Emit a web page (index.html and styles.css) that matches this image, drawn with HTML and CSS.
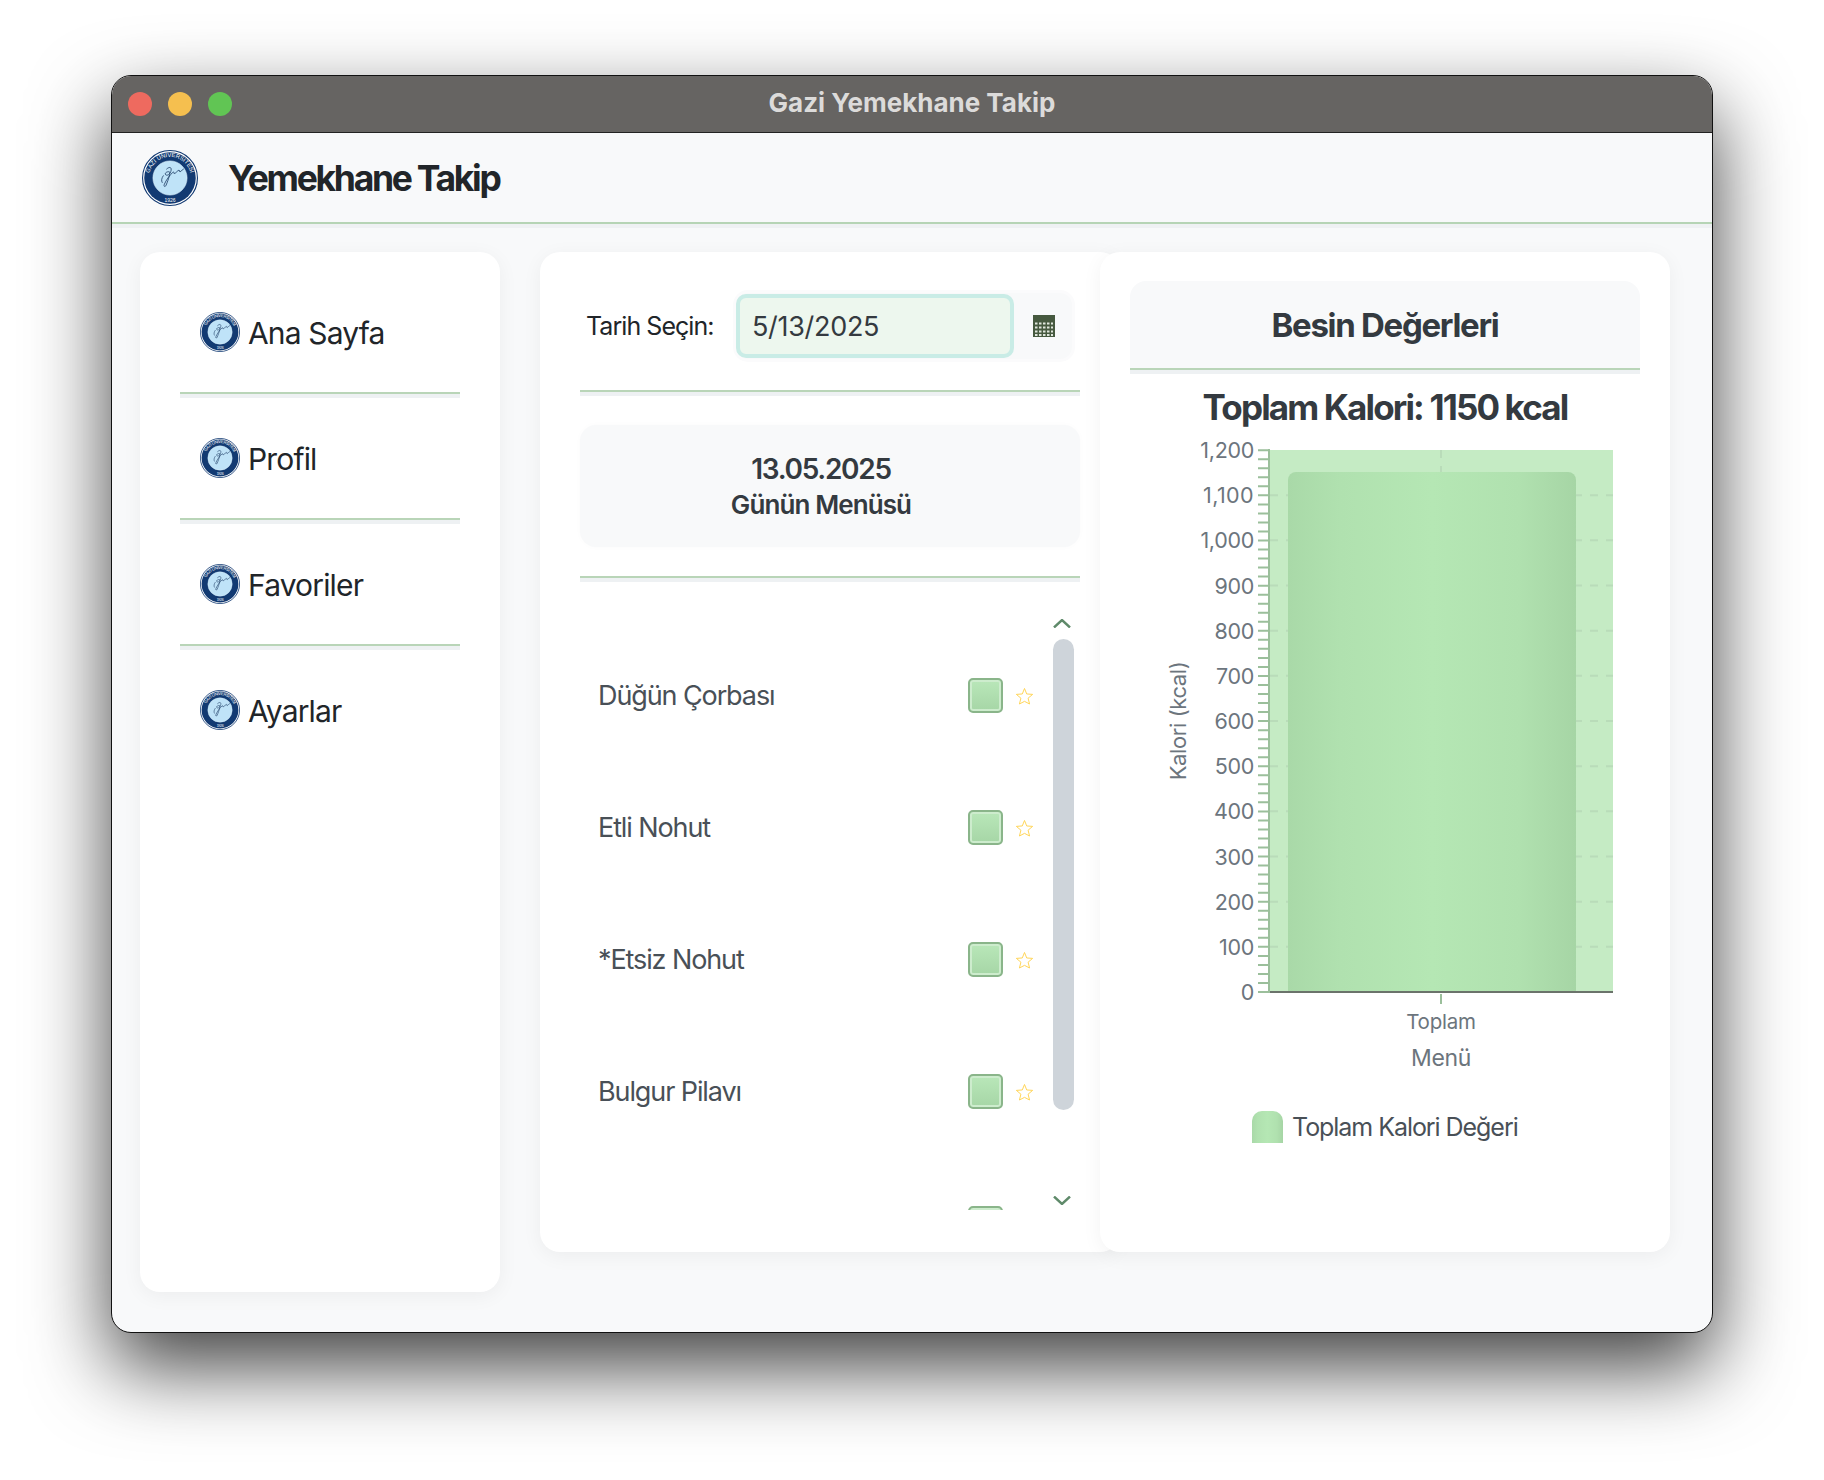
FILE: index.html
```html
<!DOCTYPE html>
<html lang="tr">
<head>
<meta charset="utf-8">
<title>Gazi Yemekhane Takip</title>
<link rel="stylesheet" href="styles.css">
</head>
<body>
<svg class="defs" width="0" height="0" aria-hidden="true">
  <defs>
    <path id="arcTop" d="M17 68A37.600 37.600 0 1 1 83 68"/>
    <symbol id="seal" viewBox="0 0 100 100">
      <circle cx="50" cy="50" r="49" fill="#fff" stroke="#123a72" stroke-width="2"/>
      <circle cx="50" cy="50" r="46" fill="#123a72"/>
      <circle cx="50" cy="50" r="30.500" fill="#bfe3f8" stroke="#dff1fb" stroke-width="1"/>
      <text class="seal-text" font-size="10.500" text-anchor="middle"><textPath href="#arcTop" startOffset="50%">GAZİ ÜNİVERSİTESİ</textPath></text>
      <text class="seal-text" x="50" y="92" text-anchor="middle" font-size="9">1926</text>
      <path d="M44 34c5-5 9-3 8 2-1 7-7 11-10 8-2-3 3-6 7-5 2 1-1 12-6 24-2 4-5 2-3-2 3-7 10-17 15-21 3-3 1 3 3 2 3-1 5-5 8-6 2 0 0 3 2 3 2-1 4-4 6-5M38 46c-3 4-4 9-2 12" fill="none" stroke="#16345e" stroke-width="1.400" stroke-linecap="round"/>
    </symbol>
    <symbol id="star" viewBox="0 0 18 18">
      <path d="M9 1.400l2.100 5.200 5.600.4-4.300 3.600 1.400 5.500L9 13.600l-4.800 2.500 1.400-5.500L1.300 7l5.600-.4z" fill="#fff" stroke="#ffd350" stroke-width=".9"/>
    </symbol>
    <linearGradient id="barFill" x1="0" x2="1" y1="0" y2="0">
      <stop offset="0" stop-color="#a9d9a8"/>
      <stop offset=".18" stop-color="#b0e1af"/>
      <stop offset=".5" stop-color="#b5e7b4"/>
      <stop offset=".8" stop-color="#b0e1af"/>
      <stop offset="1" stop-color="#a6d5a5"/>
    </linearGradient>
  </defs>
</svg>

<div class="window">
  <div class="titlebar">
    <div class="lights">
      <span class="light red"></span>
      <span class="light yellow"></span>
      <span class="light green"></span>
    </div>
    <div class="window-title">Gazi Yemekhane Takip</div>
  </div>

  <header class="app-header">
    <svg class="seal-lg"><use href="#seal"/></svg>
    <h1 class="app-title">Yemekhane Takip</h1>
  </header>

  <main class="content">
    <nav class="panel sidebar">
      <a class="nav-item"><svg class="seal-sm"><use href="#seal"/></svg><span>Ana Sayfa</span></a>
      <div class="sep"></div>
      <a class="nav-item"><svg class="seal-sm"><use href="#seal"/></svg><span>Profil</span></a>
      <div class="sep"></div>
      <a class="nav-item"><svg class="seal-sm"><use href="#seal"/></svg><span>Favoriler</span></a>
      <div class="sep"></div>
      <a class="nav-item"><svg class="seal-sm"><use href="#seal"/></svg><span>Ayarlar</span></a>
    </nav>

    <section class="panel menu">
      <div class="date-row">
        <span class="date-label">Tarih Seçin:</span>
        <div class="date-picker">
          <div class="date-field">5/13/2025</div>
          <div class="date-btn">
            <svg width="22" height="22" viewBox="0 0 22 22">
              <rect width="22" height="22" fill="#46593f"/>
              <path d="M2 8.500H20M2 12.500H20M2 16.500H20M2 20H20" stroke="#dfe6dc" stroke-width="2" stroke-dasharray="2.500 1.500"/>
            </svg>
          </div>
        </div>
      </div>
      <div class="sep sep-date"></div>
      <div class="day-box">
        <div class="day-date">13.05.2025</div>
        <div class="day-caption">Günün Menüsü</div>
      </div>
      <div class="sep sep-day"></div>
      <div class="list-area">
        <div class="rows">
          <div class="row"><span class="dish">Düğün Çorbası</span><span class="check"></span><svg class="star"><use href="#star"/></svg></div>
          <div class="row"><span class="dish">Etli Nohut</span><span class="check"></span><svg class="star"><use href="#star"/></svg></div>
          <div class="row"><span class="dish">*Etsiz Nohut</span><span class="check"></span><svg class="star"><use href="#star"/></svg></div>
          <div class="row"><span class="dish">Bulgur Pilavı</span><span class="check"></span><svg class="star"><use href="#star"/></svg></div>
          <div class="row"><span class="dish"></span><span class="check"></span><svg class="star"><use href="#star"/></svg></div>
        </div>
        <div class="scroll">
          <svg class="arrow" width="18" height="9" viewBox="0 0 18 9"><path d="M1 8.500L9 1l8 7.500" fill="none" stroke="#5f8a6a" stroke-width="2.400"/></svg>
          <div class="thumb"></div>
          <svg class="arrow arrow-down" width="18" height="9" viewBox="0 0 18 9"><path d="M1 .5L9 8l8-7.500" fill="none" stroke="#5f8a6a" stroke-width="2.400"/></svg>
        </div>
      </div>
    </section>

    <section class="panel nutrition">
      <div class="nut-box"><h2 class="nut-title">Besin Değerleri</h2></div>
      <div class="sep"></div>
      <h3 class="total">Toplam Kalori: 1150 kcal</h3>
      <svg class="chart" width="510" height="720" viewBox="1130 440 510 720">
        <rect x="1270" y="450" width="343" height="542" fill="#c5ebc4"/>
        <path class="grid" d="M1270 495.200H1613M1270 540.300H1613M1270 585.500H1613M1270 630.700H1613M1270 675.800H1613M1270 721H1613M1270 766.200H1613M1270 811.300H1613M1270 856.500H1613M1270 901.700H1613M1270 946.800H1613M1441 450V992"/>
        <path d="M1288 992V480a8 8 0 0 1 8-8h272a8 8 0 0 1 8 8V992z" fill="url(#barFill)"/>
        <path class="ticks" d="M1263 993V449"/>
        <path class="axis-y" d="M1269 449V993M1441 994V1004"/>
        <path class="axis-x" d="M1270 992H1613"/>
        <g class="y-labels">
          <text x="1254" y="458">1,200</text>
          <text class="wide" x="1254" y="503">1,100</text>
          <text x="1254" y="548">1,000</text>
          <text x="1254" y="594">900</text>
          <text x="1254" y="639">800</text>
          <text x="1254" y="684">700</text>
          <text x="1254" y="729">600</text>
          <text x="1254" y="774">500</text>
          <text x="1254" y="819">400</text>
          <text x="1254" y="865">300</text>
          <text x="1254" y="910">200</text>
          <text x="1254" y="955">100</text>
          <text x="1254" y="1000">0</text>
        </g>
        <text class="axis-title" transform="translate(1186 721) rotate(-90)" text-anchor="middle">Kalori (kcal)</text>
        <text class="cat-label" x="1441" y="1029" text-anchor="middle">Toplam</text>
        <text class="menu-label" x="1441" y="1066" text-anchor="middle">Menü</text>
        <path d="M1252 1143V1121a10 10 0 0 1 10-10h11a10 10 0 0 1 10 10V1143z" fill="url(#barFill)"/>
        <text class="legend" x="1292" y="1136">Toplam Kalori Değeri</text>
      </svg>
    </section>
  </main>
</div>
</body>
</html>
```

FILE: styles.css
```css
* { box-sizing: border-box; }

html, body { margin: 0; padding: 0; }

body {
  width: 1824px;
  height: 1480px;
  padding: 75px 0 0 111px;
  background: #fff;
  font-family: "Inter", "Liberation Sans", sans-serif;
  overflow: hidden;
}

.defs { position: absolute; overflow: visible; }

.window {
  width: 1602px;
  height: 1258px;
  border: 1px solid #111;
  border-radius: 20px;
  background: #f8f9fa;
  overflow: hidden;
  box-shadow: 0 34px 80px 0 rgba(0, 0, 0, .75);
}

.titlebar {
  position: relative;
  height: 57px;
  background: #666462;
  border-bottom: 1px solid #222;
  display: flex;
  align-items: center;
  justify-content: center;
}

.lights {
  position: absolute;
  left: 16px;
  top: 16px;
  display: flex;
  gap: 16px;
}

.light { width: 24px; height: 24px; border-radius: 50%; }
.red { background: #ee6a5f; }
.yellow { background: #f5bf4f; }
.green { background: #61c554; }

.window-title {
  color: #dcdbda;
  font-size: 26px;
  font-weight: 700;
  padding-bottom: 3px;
}

.app-header {
  height: 91px;
  padding-left: 30px;
  display: flex;
  align-items: center;
  gap: 30px;
  border-bottom: 2px solid #b6d4b5;
  position: relative;
}

.seal-lg { width: 56px; height: 56px; }
.seal-sm { width: 40px; height: 40px; flex: none; }

.seal-text {
  fill: #fff;
  font-family: "Liberation Sans", sans-serif;
  font-weight: 400;
}

.app-title {
  margin: 2px 0 0;
  color: #212529;
  font-size: 35.500px;
  font-weight: 700;
  letter-spacing: -2.300px;
}

.content {
  display: flex;
  align-items: flex-start;
  padding: 28px 0 0 28px;
  box-shadow: inset 0 4px 0 #eff1f3;
}

.panel {
  background: #fff;
  border-radius: 20px;
  box-shadow: 0 4px 20px rgba(0, 0, 0, .05);
}

.sep {
  height: 6px;
  border-top: 2px solid #b9d5b8;
  background: #eef1f3;
}

.sidebar {
  width: 360px;
  height: 1040px;
  margin-right: 40px;
  padding: 20px 40px 0;
}

.nav-item {
  display: flex;
  align-items: center;
  gap: 8px;
  padding: 40px 0 40px 20px;
  height: 120px;
  color: #212529;
  font-size: 30px;
  letter-spacing: -.85px;
}

.nav-item span { margin-top: 2px; }

.menu {
  width: 580px;
  height: 1000px;
  margin-right: -20px;
  padding: 41px 40px 0 40px;
}

.date-row {
  display: flex;
  align-items: center;
  height: 66px;
  padding-left: 6px;
  gap: 23px;
}

.date-label {
  color: #212529;
  font-size: 25px;
  letter-spacing: -.95px;
  width: 127px;
  white-space: nowrap;
}

.date-picker {
  display: flex;
  align-items: center;
  width: 336px;
  height: 66px;
  background: #f8f9fa;
  border-radius: 12px;
  box-shadow: 0 0 0 3px #fbfbfc;
}

.date-field {
  width: 278px;
  height: 64px;
  padding-left: 12px;
  display: flex;
  align-items: center;
  background: #edf7ee;
  border: 4px solid #c9ece6;
  border-radius: 10px;
  color: #343a40;
  font-size: 27px;
  letter-spacing: -.3px;
}

.date-btn {
  flex: 1;
  display: flex;
  align-items: center;
  padding-left: 19px;
}

.sep-date { margin-top: 31px; }

.day-box {
  margin-top: 29px;
  height: 122px;
  background: #f8f9fa;
  border-radius: 16px;
  box-shadow: 0 0 6px rgba(0, 0, 0, .02);
  padding-top: 26px;
  text-align: center;
  color: #343a40;
  padding-right: 18px;
}

.day-date {
  font-size: 28px;
  font-weight: 600;
  line-height: 36px;
  letter-spacing: -1.300px;
}

.day-caption {
  font-size: 26px;
  font-weight: 600;
  line-height: 36px;
  letter-spacing: -.9px;
}

.sep-day { margin-top: 29px; }

.list-area {
  display: flex;
  height: 628px;
}

.rows {
  width: 473px;
  height: 628px;
  overflow: hidden;
  padding-top: 47px;
}

.row {
  display: flex;
  align-items: center;
  height: 132px;
  padding-left: 18px;
  padding-right: 19px;
}

.dish {
  flex: 1;
  color: #495057;
  font-size: 27px;
  letter-spacing: -1.100px;
}

.check {
  width: 35px;
  height: 35px;
  border: 2px solid #8ab58a;
  border-radius: 5px;
  background: linear-gradient(#b9e7b9, #a6d6a6);
  box-shadow: inset 0 0 0 2px #cdeccd;
}

.star {
  width: 19px;
  height: 19px;
  margin-left: 12px;
  margin-top: 3px;
}

.scroll {
  padding-top: 37px;
  width: 21px;
  display: flex;
  flex-direction: column;
  align-items: flex-start;
}

.arrow { display: block; flex: none; }

.thumb {
  width: 21px;
  height: 471px;
  margin-top: 11px;
  border-radius: 11px;
  background: #ced4da;
}

.arrow-down { margin-top: 86px; }

.nutrition {
  width: 570px;
  height: 1000px;
  padding: 29px 30px 0;
  position: relative;
}

.nut-box {
  height: 87px;
  background: #f8f9fa;
  border-radius: 16px 16px 0 0;
  display: flex;
  align-items: center;
  justify-content: center;
}

.nut-title {
  margin: 0;
  color: #343a40;
  font-size: 33px;
  font-weight: 700;
  letter-spacing: -1.300px;
}

.total {
  margin: 0;
  height: 66px;
  line-height: 66px;
  text-align: center;
  color: #343a40;
  font-size: 35px;
  font-weight: 700;
  letter-spacing: -1.850px;
}

.chart { display: block; }

.grid {
  fill: none;
  stroke: #b9dcb9;
  stroke-width: 2;
  stroke-dasharray: 8 8;
}

.ticks {
  fill: none;
  stroke: #9bbf9b;
  stroke-width: 10;
  stroke-dasharray: 2 7.030;
}

.axis-y { fill: none; stroke: #9bbf9b; stroke-width: 2; }
.axis-x { fill: none; stroke: #6b736b; stroke-width: 2; }

.y-labels text {
  fill: #6c757d;
  font-size: 21.500px;
  text-anchor: end;
  letter-spacing: -.3px;
}

.y-labels .wide { letter-spacing: .4px; }

.axis-title { fill: #6c757d; font-size: 22px; letter-spacing: -.4px; }
.menu-label { fill: #6c757d; font-size: 23px; letter-spacing: -.3px; }
.cat-label { fill: #6c757d; font-size: 20.500px; letter-spacing: -.2px; }
.legend { fill: #495057; font-size: 25px; letter-spacing: -1.050px; }
```
